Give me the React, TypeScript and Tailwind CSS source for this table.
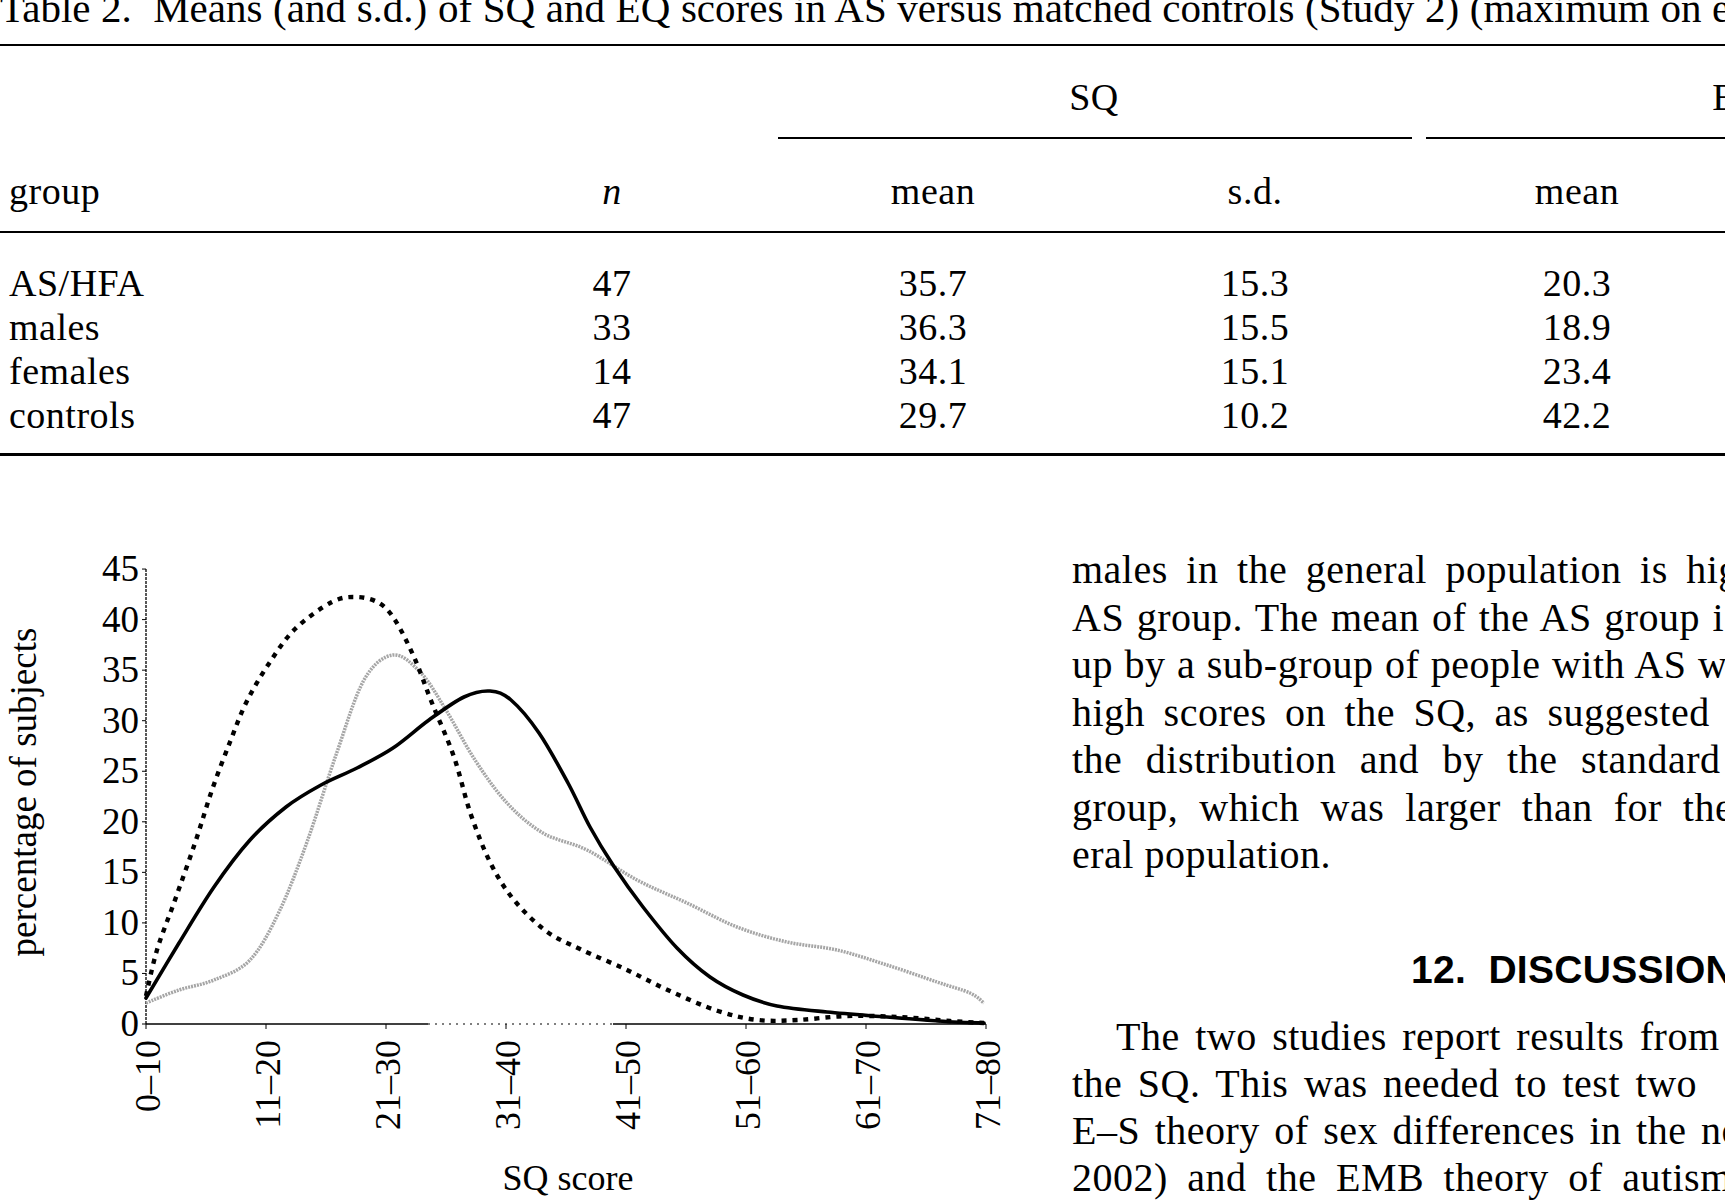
import React from 'react';

type Pt = [number, number];

// catmull-rom -> cubic bezier, points are page pixels
function smooth(pts: Pt[]) {
  let d = `M${pts[0][0]},${pts[0][1]}`;
  for (let i = 0; i < pts.length - 1; i++) {
    const p0 = pts[i - 1] || pts[i];
    const p1 = pts[i];
    const p2 = pts[i + 1];
    const p3 = pts[i + 2] || p2;
    const c1x = p1[0] + (p2[0] - p0[0]) / 6;
    const c1y = p1[1] + (p2[1] - p0[1]) / 6;
    const c2x = p2[0] - (p3[0] - p1[0]) / 6;
    const c2y = p2[1] - (p3[1] - p1[1]) / 6;
    d += ` C${c1x.toFixed(1)},${c1y.toFixed(1)} ${c2x.toFixed(1)},${c2y.toFixed(1)} ${p2[0]},${p2[1]}`;
  }
  return d;
}

const solid: Pt[] = [
  [146, 998], [179, 943], [214, 887], [250, 840], [286, 807], [321, 785], [357, 768], [393, 748],
  [429, 720], [464, 697], [490, 691], [511, 700], [539, 733], [568, 783], [590, 827], [613, 865],
  [643, 907], [677, 948], [710, 977], [743, 995], [777, 1006], [827, 1012], [887, 1017], [953, 1022], [984, 1023],
];

const dashed: Pt[] = [
  [146, 996], [157, 950], [175, 900], [195, 843], [212, 790], [230, 742], [246, 703], [268, 665],
  [295, 629], [332, 602], [357, 597], [379, 603], [395, 620], [414, 657], [432, 703], [454, 757],
  [471, 815], [491, 864], [514, 900], [546, 931], [580, 949], [627, 970], [672, 992], [718, 1011],
  [758, 1020], [798, 1020], [847, 1016], [900, 1017], [950, 1021], [984, 1023],
];

const grey: Pt[] = [
  [146, 1003], [179, 990], [214, 980], [250, 960], [279, 912], [307, 842], [336, 755], [364, 680],
  [393, 655], [421, 673], [446, 710], [475, 760], [507, 803], [543, 833], [587, 850], [637, 880],
  [687, 903], [737, 927], [787, 942], [837, 950], [887, 965], [937, 982], [970, 993], [984, 1003],
];

const xLabels = ['0–10', '11–20', '21–30', '31–40', '41–50', '51–60', '61–70', '71–80'];
const yLabels = [0, 5, 10, 15, 20, 25, 30, 35, 40, 45];

const rows = [
  ['AS/HFA', '47', '35.7', '15.3', '20.3', '5.9'],
  ['males', '33', '36.3', '15.5', '18.9', '5.6'],
  ['females', '14', '34.1', '15.1', '23.4', '5.9'],
  ['controls', '47', '29.7', '10.2', '42.2', '11.3'],
];

const grid = 'grid grid-cols-[452px_320px_322px_322px_322px_322px] w-[2060px]';

function Chart() {
  const yOf = (v: number) => 1024 - v * 10.11;
  return (
    <svg width={1040} height={744} viewBox="0 456 1040 744" className="shrink-0">
      <g fontFamily="'Liberation Serif', serif" fill="#000">
        <text x={0} y={0} fontSize={37} textAnchor="middle" transform="translate(36 792) rotate(-90)">
          percentage of subjects
        </text>
        {yLabels.map((v) => (
          <text key={v} x={139} y={yOf(v) + 12} fontSize={37} textAnchor="end">
            {v}
          </text>
        ))}
        {xLabels.map((l, i) => (
          <text
            key={l}
            x={0}
            y={0}
            fontSize={36}
            textAnchor="end"
            transform={`translate(${146 + i * 120 + 14} 1040) rotate(-90)`}
          >
            {l}
          </text>
        ))}
        <text x={568} y={1190} fontSize={36} textAnchor="middle">
          SQ score
        </text>
      </g>

      {/* axes */}
      <line x1={146} y1={569} x2={146} y2={1024} stroke="#222" strokeWidth={1.5} strokeDasharray="3 1" />
      {yLabels.map((v) => (
        <line key={v} x1={142} y1={yOf(v)} x2={146} y2={yOf(v)} stroke="#000" strokeWidth={1} />
      ))}
      <line x1={146} y1={1024} x2={428} y2={1024} stroke="#000" strokeWidth={1.5} />
      <line x1={428} y1={1024} x2={613} y2={1024} stroke="#555" strokeWidth={1.5} strokeDasharray="2 5" />
      <line x1={613} y1={1024} x2={986} y2={1024} stroke="#000" strokeWidth={1.5} />
      {xLabels.map((l, i) => (
        <line key={l} x1={146 + i * 120} y1={1024} x2={146 + i * 120} y2={1029} stroke="#000" strokeWidth={1} />
      ))}

      {/* curves */}
      <path d={smooth(grey)} fill="none" stroke="#a6a6a6" strokeWidth={3.5} strokeDasharray="2 1" />
      <path d={smooth(solid)} fill="none" stroke="#000" strokeWidth={3.6} strokeLinecap="round" />
      <path d={smooth(dashed)} fill="none" stroke="#000" strokeWidth={4.4} strokeDasharray="5 6" />
    </svg>
  );
}

export default function App() {
  return (
    <div className="w-[1725px] h-[1200px] overflow-hidden bg-white text-black font-['Liberation_Serif',serif]">
      <p className="-mt-[12px] text-[41px] leading-[41px] whitespace-pre [word-spacing:0.4px]">
        {'Table 2.  Means (and s.d.) of SQ and EQ scores in AS versus matched controls (Study 2) (maximum on each scale = 80)'}
      </p>
      <div className="mt-[15px] h-[2px] bg-black" />

      <div className="text-[38px] leading-[44px] tracking-[0.5px]">
        <div className={`${grid} mt-[29px] h-[44px]`}>
          <div className="col-start-3 col-span-2 text-center">SQ</div>
          <div className="col-span-2 text-center">EQ</div>
        </div>
        <div className={`${grid} mt-[18px] h-[2px]`}>
          <div className="col-start-3 col-span-2 ml-[6px] mr-[4px] bg-black" />
          <div className="col-span-2 ml-[10px] bg-black" />
        </div>
        <div className={`${grid} mt-[30px] h-[44px]`}>
          <div className="pl-[9px]">group</div>
          <div className="text-center italic">n</div>
          <div className="text-center">mean</div>
          <div className="text-center">s.d.</div>
          <div className="text-center">mean</div>
          <div className="text-center">s.d.</div>
        </div>
        <div className="mt-[18px] h-[2px] bg-black" />
        <div className="mt-[28px]">
          {rows.map((r) => (
            <div key={r[0]} className={`${grid} h-[44px]`}>
              <div className="pl-[9px]">{r[0]}</div>
              {r.slice(1).map((c, i) => (
                <div key={i} className="text-center">
                  {c}
                </div>
              ))}
            </div>
          ))}
        </div>
        <div className="mt-[16px] h-[3px] bg-black" />
      </div>

      <div className="flex">
        <Chart />
        <div className="pl-[32px] pt-[90px] text-[40px] leading-[47.5px] tracking-[0.5px] whitespace-nowrap">
          <div className="[word-spacing:8px]">males in the general population is higher than</div>
          <div className="[word-spacing:2px]">AS group. The mean of the AS group is</div>
          <div className="[word-spacing:1px]">up by a sub-group of people with AS who</div>
          <div className="[word-spacing:8px]">high scores on the SQ, as suggested by</div>
          <div className="[word-spacing:13px]">the distribution and by the standard deviation</div>
          <div className="[word-spacing:10.5px]">group, which was larger than for the</div>
          <div>eral population.</div>

          <h2 className="mt-[67px] pl-[339px] font-['Liberation_Sans',sans-serif] font-bold text-[39px] leading-[47px] tracking-[0.3px] whitespace-pre">
            {'12.  DISCUSSION'}
          </h2>

          <div className="mt-[20px] leading-[47px]">
            <div className="pl-[44px] [word-spacing:5px]">The two studies report results from</div>
            <div className="[word-spacing:5px]">the SQ. This was needed to test two</div>
            <div className="[word-spacing:4px]">E–S theory of sex differences in the normal</div>
            <div className="[word-spacing:9px]">2002) and the EMB theory of autism</div>
          </div>
        </div>
      </div>
    </div>
  );
}
